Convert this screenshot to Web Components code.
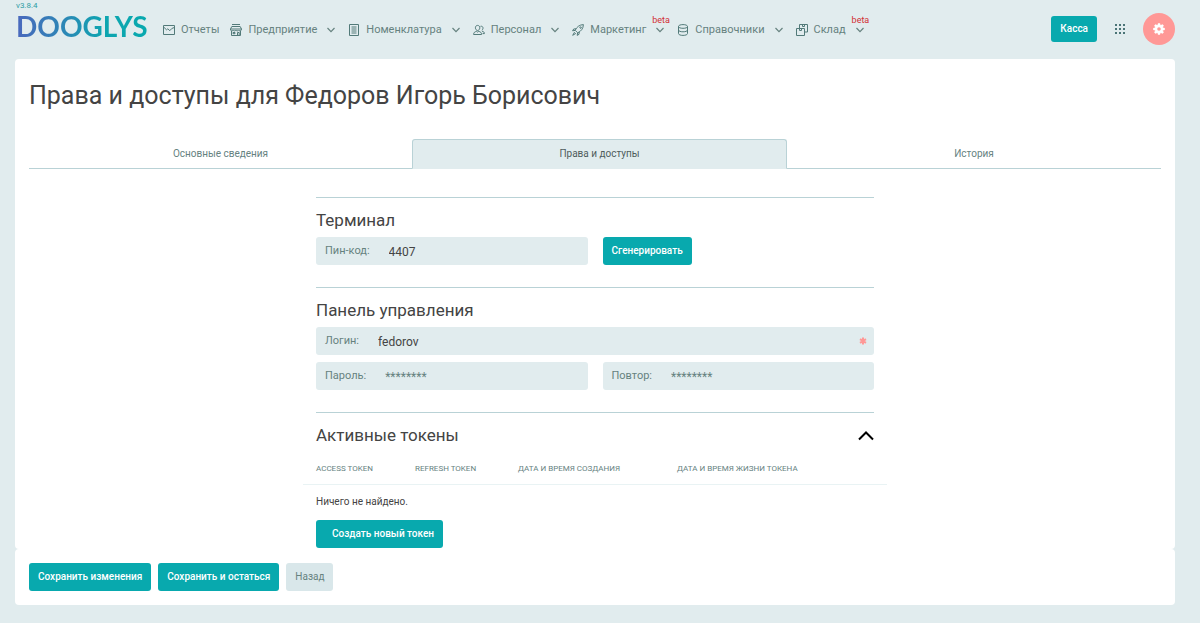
<!DOCTYPE html>
<html lang="ru">
<head>
<meta charset="utf-8">
<meta name="viewport" content="width=device-width, initial-scale=1">
<title>Права и доступы — DOOGLYS</title>
<style>
  :root {
    --bg: #e1ecee;
    --teal: #08a9ae;
    --muted: #66827f;
    --dark: #444;
    --line: #b9d2d6;
    --rose: #ff9896;
  }
  body {
    margin: 0;
    background: var(--bg);
    color: var(--dark);
    font: 12px/16px Roboto, "Liberation Sans", sans-serif;
  }
</style>
</head>
<body>
<dg-app></dg-app>
<script>
const define = (name, html, setup) => {
  const template = document.createElement('template');
  template.innerHTML = '<style>*{box-sizing:border-box}:host([hidden]){display:none}</style>' + html;
  customElements.define(name, class extends HTMLElement {
    constructor() {
      super();
      this.attachShadow({ mode: 'open' }).append(template.content.cloneNode(true));
    }
    connectedCallback() {
      if (setup) setup.call(this, this.shadowRoot);
    }
  });
};

const ICONS = {
  mail: '<path d="M.5 1.500h11v9H.5zM.8 3.200l2.700 2.600 1.300-1 2 1.900 2-2.200 2.400-1"/>',
  shop: '<path d="M2 .5h8M1.800 2.500h8.400L11.500 5H.5zM.5 5v1c.5 1.200 2.200 1.200 2.700 0 .5 1.200 2.200 1.200 2.700 0 .5 1.200 2.200 1.200 2.700 0 .5 1.200 2.200 1.200 2.800 0V5M1.500 7v4.500h9V7M7.500 11V8.500h1.700V11M3 8.500h2v1.200H3z"/>',
  list: '<path d="M1.500.5h9v11h-9zM3.500 3h5M3.500 5h5M3.500 7h5M3.500 9h5"/>',
  people: '<path d="M4.600 1.400c1.400 0 2.200 1 2.200 2.400S5.800 6.500 4.600 6.500 2.400 5.200 2.400 3.800s.8-2.400 2.200-2.400zM.6 10.500c0-2 1.200-2.800 2.900-3.100l1.100.7 1.100-.7c1.700.3 2.900 1.100 2.900 3.100zM7.500 2.300c1.700-.4 2.600.7 2.500 2-.1.900-.5 1.600-1.200 2M9 7.200c1.600.3 2.400 1 2.400 2.400H9.600"/>',
  rocket: '<path d="M3.200 6.300C4.600 3 7.500.7 11.400.6 11.300 4.500 9 7.400 5.700 8.800zM4 4.800 1.700 5 .6 6.800l2.600-.4M7.200 8l-.2 2.300-1.800 1.100.4-2.600M2.600 8.100.7 11.300l3.200-1.900M8.600 2.900a.7.7 0 1 1-.1 0z"/>',
  base: '<path d="M1.500 2.500C1.500 1.300 3.500.6 6 .6s4.500.7 4.500 1.900S8.500 4.300 6 4.300 1.500 3.600 1.500 2.500zM1.500 2.500v7c0 1.200 2 1.900 4.500 1.900s4.500-.7 4.500-1.900v-7M1.500 6c0 1.100 2 1.800 4.500 1.800s4.500-.7 4.500-1.800"/>',
  boxes: '<path d="M3.500 4.500v-4h8v7.500H8.500M6.500.5v2h2v-2M.5 4.500h8v7h-8zM3.500 4.500v2h2v-2"/>'
};

define('dg-icon', `
  <style>
    :host { display: block; width: 12px; height: 12px; }
    svg { display: block; width: 100%; height: 100%; fill: none; stroke: currentColor; stroke-width: 1; stroke-linejoin: round; }
  </style>
  <svg viewBox="0 0 12 12" aria-hidden="true"></svg>
`, function (root) {
  root.querySelector('svg').innerHTML = ICONS[this.getAttribute('name')];
});

define('dg-logo', `
  <style>
    :host { display: block; width: 134px; }
    a { display: block; text-decoration: none; }
    small { display: block; font-size: 8px; line-height: 12px; color: #2f9da5; }
    span {
      display: block;
      font: 700 28px/28px Lato, sans-serif;
      color: transparent;
      background: linear-gradient(90deg, #4a68bd, #2d86b6 35%, #0ea5b0 65%, #08a9ae);
      -webkit-background-clip: text;
      background-clip: text;
    }
  </style>
  <a href="#"><small>v3.8.4</small><span>DOOGLYS</span></a>
`);

define('dg-nav-item', `
  <style>
    :host { display: block; color: var(--muted); font-size: 11px; }
    a { display: flex; align-items: center; color: inherit; text-decoration: none; line-height: 16px; }
    .icon { margin-right: 6px; color: #527a79; }
    .more { display: flex; position: relative; margin-left: 10px; }
    .more svg { width: 8px; height: 6px; fill: none; stroke: currentColor; stroke-width: 1.200; }
    sup { position: absolute; left: -4px; bottom: 8px; font-size: 9px; line-height: 10px; color: #d22f35; }
  </style>
  <a href="#">
    <span class="icon"></span><slot></slot>
    <span class="more"><svg viewBox="0 0 8 6" aria-hidden="true"><path d="M.5 1 4 4.600 7.500 1"/></svg><sup>beta</sup></span>
  </a>
`, function (root) {
  const icon = document.createElement('dg-icon');
  icon.setAttribute('name', this.getAttribute('icon'));
  root.querySelector('.icon').append(icon);
  if (this.hasAttribute('plain')) root.querySelector('.more').remove();
  else if (!this.hasAttribute('beta')) root.querySelector('sup').remove();
});

define('dg-button', `
  <style>
    :host { display: block; }
    button {
      display: block; width: 100%; height: 28px; margin: 0; padding: 0 9px;
      border: 0; border-radius: 3px; background: var(--teal); color: #fff;
      font: 500 10px/16px Roboto, sans-serif; white-space: nowrap; cursor: pointer;
    }
    :host([kind="plain"]) button { background: #d9e7ea; color: var(--muted); font-weight: 400; }
    :host([kind="indented"]) button { padding-left: 16px; }
    :host([kind="compact"]) button { height: 26px; }
  </style>
  <button type="button"><slot></slot></button>
`);

define('dg-header', `
  <style>
    :host { display: flex; height: 59px; padding: 0 25px 1px 16px; }
    nav { display: flex; align-items: center; gap: 13px; margin-left: 13px; padding-top: 2px; }
    nav dg-nav-item:first-child { margin-right: -2px; }
    .tools { display: flex; align-items: center; gap: 17px; margin-left: auto; }
    .tools button { padding: 0; border: 0; background: none; cursor: pointer; }
    svg { display: block; }
    .tools .gear { display: grid; place-items: center; width: 32px; height: 32px; border-radius: 50%; background: var(--rose); }
  </style>
  <dg-logo></dg-logo>
  <nav>
    <dg-nav-item icon="mail" plain>Отчеты</dg-nav-item>
    <dg-nav-item icon="shop">Предприятие</dg-nav-item>
    <dg-nav-item icon="list">Номенклатура</dg-nav-item>
    <dg-nav-item icon="people">Персонал</dg-nav-item>
    <dg-nav-item icon="rocket" beta>Маркетинг</dg-nav-item>
    <dg-nav-item icon="base">Справочники</dg-nav-item>
    <dg-nav-item icon="boxes" beta>Склад</dg-nav-item>
  </nav>
  <div class="tools">
    <dg-button kind="compact">Касса</dg-button>
    <button type="button" aria-label="Приложения">
      <svg width="12" height="12" viewBox="0 0 12 12" fill="#4a7476">
        <path d="M1 1h2v2H1zM5 1h2v2H5zM9 1h2v2H9zM1 5h2v2H1zM5 5h2v2H5zM9 5h2v2H9zM1 9h2v2H1zM5 9h2v2H5zM9 9h2v2H9z"/>
      </svg>
    </button>
    <button class="gear" type="button" aria-label="Настройки">
      <svg width="12" height="12" viewBox="-6 -6 12 12">
        <g fill="#fff">
          <circle r="4.200"/>
          <path d="M-1-5.800h2l.6 2h-3.200zM-1 5.800h2l.6-2h-3.200z"/>
          <path transform="rotate(45)" d="M-1-5.800h2l.6 2h-3.200zM-1 5.800h2l.6-2h-3.200z"/>
          <path transform="rotate(90)" d="M-1-5.800h2l.6 2h-3.200zM-1 5.800h2l.6-2h-3.200z"/>
          <path transform="rotate(135)" d="M-1-5.800h2l.6 2h-3.200zM-1 5.800h2l.6-2h-3.200z"/>
        </g>
        <circle r="1.800" fill="#ff9896"/>
      </svg>
    </button>
  </div>
`);

define('dg-tabs', `
  <style>
    :host { display: grid; grid-template-columns: 383fr 375fr 374fr; height: 30px; }
    ::slotted(a) {
      display: block; padding: 7px 6px 6px; border-bottom: 1px solid var(--line);
      font-size: 10px; line-height: 16px; text-align: center; text-decoration: none; color: var(--muted);
    }
    ::slotted(a[aria-current]) {
      padding-top: 6px; border: 1px solid var(--line); border-bottom-color: var(--bg);
      border-radius: 3px 3px 0 0; background: var(--bg); color: #4f5c5c;
    }
  </style>
  <slot></slot>
`);

define('dg-section', `
  <style>
    :host { display: block; border-top: 1px solid var(--line); padding: 11px 0 22px; }
    header { display: flex; justify-content: space-between; align-items: center; margin-bottom: 5px; }
    h2 { margin: 0; font-weight: 400; font-size: 17px; line-height: 23px; color: var(--dark); }
  </style>
  <header><h2></h2><slot name="action"></slot></header>
  <slot></slot>
`, function (root) {
  root.querySelector('h2').textContent = this.getAttribute('heading');
});

define('dg-row', `
  <style>
    :host { display: grid; grid-template-columns: 1fr 1fr; gap: 15px; justify-items: start; }
    ::slotted(dg-field) { width: 100%; }
  </style>
  <slot></slot>
`);

define('dg-field', `
  <style>
    :host { display: flex; align-items: center; height: 28px; padding: 0 7px 0 9px; border-radius: 3px; background: var(--bg); }
    label { padding-bottom: 1px; font-size: 11px; line-height: 16px; color: var(--muted); }
    input {
      flex: 1; min-width: 0; height: 28px; margin: 0 0 0 19px; padding: 1px 0 0; border: 0; outline: 0; background: none;
      font: 12px/16px Roboto, sans-serif; color: var(--dark);
    }
    input::placeholder { color: var(--muted); opacity: 1; }
    svg { width: 8px; height: 8px; stroke: var(--rose); stroke-width: 2; }
  </style>
  <label for="control"></label>
  <input id="control">
  <svg viewBox="0 0 8 8" aria-hidden="true"><path d="M4 .5v7M1 2.200l6 3.600M7 2.200 1 5.800"/></svg>
`, function (root) {
  root.querySelector('label').textContent = this.getAttribute('label');
  const input = root.querySelector('input');
  input.type = this.getAttribute('type') || 'text';
  input.value = this.getAttribute('value') || '';
  input.placeholder = this.getAttribute('placeholder') || '';
  input.required = this.hasAttribute('required');
  if (!input.required) root.querySelector('svg').remove();
});

define('dg-tokens', `
  <style>
    :host { display: block; }
    .bleed { margin: 0 -13px; }
    table { width: 100%; border-collapse: collapse; table-layout: fixed; }
    th, td { padding: 0 13px; text-align: left; font-weight: 400; white-space: nowrap; }
    th { height: 32px; padding-top: 2px; border-bottom: 1px solid #e9f3f4; font-size: 8px; line-height: 12px; text-transform: uppercase; color: var(--muted); }
    td { height: 36px; font-size: 10px; line-height: 16px; }
    .a { width: 99px; } .b { width: 103px; } .c { width: 159px; }
  </style>
  <div class="bleed">
    <table>
      <colgroup><col class="a"><col class="b"><col class="c"><col></colgroup>
      <thead><tr><th>Access token</th><th>Refresh token</th><th>Дата и время создания</th><th>Дата и время жизни токена</th></tr></thead>
      <tbody><tr><td colspan="4">Ничего не найдено.</td></tr></tbody>
    </table>
  </div>
`);

define('dg-app', `
  <style>
    :host { display: block; padding-bottom: 18px; }
    main { margin: 0 25px 0 15px; }
    .card { padding: 21px 14px 1px; border-radius: 4px; background: #fff; }
    h1 { margin: 0 0 27px; font-weight: 400; font-size: 25px; line-height: 32px; color: var(--dark); }
    form { width: calc(50% - 8px); margin: 28px auto 0; }
    dg-section:last-child { padding-bottom: 0; }
    dg-section > dg-field { margin-bottom: 7px; }
    .create { display: flex; }
    .toggle { padding: 0; border: 0; background: none; cursor: pointer; }
    .toggle svg { display: block; width: 16px; height: 12px; fill: none; stroke: #000; stroke-width: 2; }
    footer { display: flex; gap: 7px; padding: 14px; border-radius: 4px; background: #fff; }
  </style>
  <dg-header></dg-header>
  <main>
    <div class="card">
      <h1>Права и доступы для Федоров Игорь Борисович</h1>
      <dg-tabs>
        <a href="#">Основные сведения</a>
        <a href="#" aria-current="page">Права и доступы</a>
        <a href="#">История</a>
      </dg-tabs>
      <form>
        <dg-section heading="Терминал">
          <dg-row>
            <dg-field label="Пин-код:" value="4407"></dg-field>
            <dg-button>Сгенерировать</dg-button>
          </dg-row>
        </dg-section>
        <dg-section heading="Панель управления">
          <dg-field label="Логин:" value="fedorov" required></dg-field>
          <dg-row>
            <dg-field label="Пароль:" type="password" placeholder="********"></dg-field>
            <dg-field label="Повтор:" type="password" placeholder="********"></dg-field>
          </dg-row>
        </dg-section>
        <dg-section heading="Активные токены">
          <button class="toggle" slot="action" type="button" aria-label="Свернуть">
            <svg viewBox="0 0 16 12" aria-hidden="true"><path d="M1 9.500 8 2.500l7 7"/></svg>
          </button>
          <dg-tokens></dg-tokens>
          <div class="create"><dg-button kind="indented">Создать новый токен</dg-button></div>
        </dg-section>
      </form>
    </div>
    <footer>
      <dg-button>Сохранить изменения</dg-button>
      <dg-button>Сохранить и остаться</dg-button>
      <dg-button kind="plain">Назад</dg-button>
    </footer>
  </main>
`);
</script>
</body>
</html>
